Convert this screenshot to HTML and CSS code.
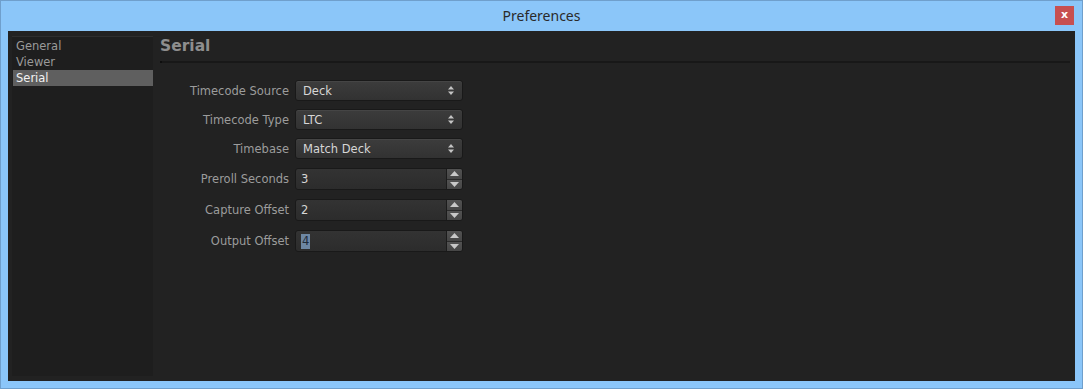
FILE: index.html
```html
<!DOCTYPE html>
<html>
<head>
<meta charset="utf-8">
<title>Preferences</title>
<link rel="stylesheet" href="styles.css">
</head>
<body>
<div class="window">
  <div class="titlebar">
    <span></span>
    <span class="title">Preferences</span>
    <button class="close">x</button>
  </div>
  <div class="content">
    <nav class="sidebar">
      <div class="item">General</div>
      <div class="item">Viewer</div>
      <div class="item selected">Serial</div>
    </nav>
    <main class="main">
      <h1 class="heading">Serial</h1>
      <div class="sep"></div>
      <div class="form">
        <div class="row">
          <label class="label">Timecode Source</label>
          <div class="combo"><span>Deck</span><svg class="updown" width="6" height="9" viewBox="0 0 6 9"><path d="M3 0L6 3.5H0Z M3 9L6 5.5H0Z" fill="#c4c4c4"/></svg></div>
        </div>
        <div class="row">
          <label class="label">Timecode Type</label>
          <div class="combo"><span>LTC</span><svg class="updown" width="6" height="9" viewBox="0 0 6 9"><path d="M3 0L6 3.5H0Z M3 9L6 5.5H0Z" fill="#c4c4c4"/></svg></div>
        </div>
        <div class="row">
          <label class="label">Timebase</label>
          <div class="combo"><span>Match Deck</span><svg class="updown" width="6" height="9" viewBox="0 0 6 9"><path d="M3 0L6 3.5H0Z M3 9L6 5.5H0Z" fill="#c4c4c4"/></svg></div>
        </div>
        <div class="row spinrow">
          <label class="label">Preroll Seconds</label>
          <div class="spin"><span class="val">3</span><div class="btns"><div class="btn"><svg width="9" height="5" viewBox="0 0 9 5"><path d="M4.5 0L9 5H0Z" fill="#c8c8c8"/></svg></div><div class="btn"><svg width="9" height="5" viewBox="0 0 9 5"><path d="M4.5 5L9 0H0Z" fill="#c8c8c8"/></svg></div></div></div>
        </div>
        <div class="row spinrow">
          <label class="label">Capture Offset</label>
          <div class="spin"><span class="val">2</span><div class="btns"><div class="btn"><svg width="9" height="5" viewBox="0 0 9 5"><path d="M4.5 0L9 5H0Z" fill="#c8c8c8"/></svg></div><div class="btn"><svg width="9" height="5" viewBox="0 0 9 5"><path d="M4.5 5L9 0H0Z" fill="#c8c8c8"/></svg></div></div></div>
        </div>
        <div class="row spinrow">
          <label class="label">Output Offset</label>
          <div class="spin"><span class="val"><span class="sel">4</span></span><div class="btns"><div class="btn"><svg width="9" height="5" viewBox="0 0 9 5"><path d="M4.5 0L9 5H0Z" fill="#c8c8c8"/></svg></div><div class="btn"><svg width="9" height="5" viewBox="0 0 9 5"><path d="M4.5 5L9 0H0Z" fill="#c8c8c8"/></svg></div></div></div>
        </div>
      </div>
    </main>
  </div>
</div>
</body>
</html>
```
FILE: styles.css
```css
* { box-sizing: border-box; }
html, body { margin: 0; padding: 0; }
body { width: 1083px; height: 389px; overflow: hidden; background: #8bc6f9; }

.window {
  width: 1083px;
  height: 389px;
  background: #8bc6f9;
  border: 1px solid #6f9fcc;
  padding: 0 7px 7px 7px;
  display: flex;
  flex-direction: column;
}

.titlebar {
  height: 30px;
  display: grid;
  grid-template-columns: 1fr auto 1fr;
  align-items: start;
}
.title {
  font-family: "Noto Sans", "Open Sans", sans-serif;
  font-size: 14px;
  color: #2a2a2a;
  line-height: 18px;
  margin-top: 6px;
}
.close {
  justify-self: end;
  width: 19px;
  height: 19px;
  margin-top: 5px;
  margin-right: 1px;
  border: none;
  padding: 0 0 2px 0;
  background: #c75050;
  color: #fff;
  font-family: "DejaVu Sans", sans-serif;
  font-weight: bold;
  font-size: 11px;
  line-height: 17px;
}

.content {
  flex: 1;
  background: #222222;
  display: flex;
  padding: 5px 0 5px 4px;
  font-family: "DejaVu Sans", Verdana, sans-serif;
  font-size: 11.5px;
}

.sidebar {
  width: 141px;
  background: #1e1e1e;
  border-top: 1px solid #2e2e2e;
  padding-left: 1px;
  padding-top: 1px;
}
.item {
  height: 16px;
  line-height: 16px;
  padding-left: 3px;
  color: #9a9a9a;
}
.item.selected {
  background: #5f5f5f;
  color: #f2f2f2;
}

.main {
  flex: 1;
  padding: 0 5px 0 7px;
  margin-top: -5px;
}
.heading {
  margin: 5px 0 0 0;
  font-size: 15.5px;
  font-weight: bold;
  color: #8e8e8e;
  line-height: 20px;
  height: 20px;
}
.sep {
  height: 2px;
  background: #181818;
  margin-top: 5px;
  border-left: 2px solid #0e0e0e;
}

.form {
  margin-top: 17px;
  display: flex;
  flex-direction: column;
  gap: 8px;
}
.row {
  display: grid;
  grid-template-columns: 129px 168px;
  column-gap: 6px;
  align-items: center;
}
.spinrow { margin-top: 1px; }
.label {
  text-align: right;
  color: #9c9c9c;
  white-space: nowrap;
}

.combo {
  height: 21px;
  border: 1px solid #191919;
  border-radius: 3px;
  background: linear-gradient(#3c3c3c, #323232);
  box-shadow: inset 0 1px 0 #454545;
  display: flex;
  align-items: center;
  justify-content: space-between;
  padding: 0 8px 0 7px;
  color: #d6d6d6;
}
.updown { display: block; }

.spin {
  height: 22px;
  border: 1px solid #191919;
  border-radius: 3px;
  background: linear-gradient(#333333, #2c2c2c);
  display: flex;
  color: #d6d6d6;
  overflow: hidden;
}
.val {
  flex: 1;
  padding-left: 5px;
  display: flex;
  align-items: center;
}
.sel {
  background: #6d87a3;
  color: #1e2b3a;
  padding: 0 1px;
  line-height: 15px;
}
.btns {
  width: 16px;
  display: flex;
  flex-direction: column;
  border-left: 1px solid #1c1c1c;
}
.btn {
  flex: 1;
  display: flex;
  align-items: center;
  justify-content: center;
  background: linear-gradient(#525252, #464646);
}
.btn + .btn { border-top: 1px solid #2a2a2a; }
.btn svg { display: block; }
```
